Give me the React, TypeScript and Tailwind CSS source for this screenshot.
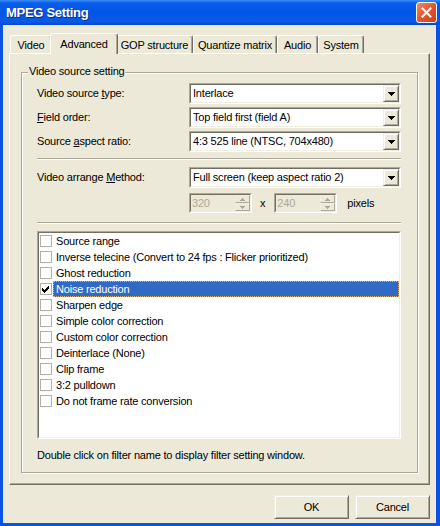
import React from "react";

const filters = [
  { name: "Source range", checked: false },
  { name: "Inverse telecine (Convert to 24 fps : Flicker prioritized)", checked: false },
  { name: "Ghost reduction", checked: false },
  { name: "Noise reduction", checked: true, selected: true },
  { name: "Sharpen edge", checked: false },
  { name: "Simple color correction", checked: false },
  { name: "Custom color correction", checked: false },
  { name: "Deinterlace (None)", checked: false },
  { name: "Clip frame", checked: false },
  { name: "3:2 pulldown", checked: false },
  { name: "Do not frame rate conversion", checked: false },
];

const tabs = [
  { label: "Video", w: "w-[42px]" },
  { label: "Advanced", w: "w-[64px]", active: true },
  { label: "GOP structure", w: "w-[77px]" },
  { label: "Quantize matrix", w: "w-[84px]" },
  { label: "Audio", w: "w-[41px]" },
  { label: "System", w: "w-[46px]" },
];

function DownArrow({ color = "#000" }: { color?: string }) {
  return (
    <svg width="7" height="4" viewBox="0 0 7 4" shapeRendering="crispEdges">
      <rect x="0" y="0" width="7" height="1" fill={color} />
      <rect x="1" y="1" width="5" height="1" fill={color} />
      <rect x="2" y="2" width="3" height="1" fill={color} />
      <rect x="3" y="3" width="1" height="1" fill={color} />
    </svg>
  );
}

function UpArrow({ color }: { color: string }) {
  return (
    <svg width="5" height="3" viewBox="0 0 5 3" shapeRendering="crispEdges">
      <rect x="2" y="0" width="1" height="1" fill={color} />
      <rect x="1" y="1" width="3" height="1" fill={color} />
      <rect x="0" y="2" width="5" height="1" fill={color} />
    </svg>
  );
}

function SmallDown({ color }: { color: string }) {
  return (
    <svg width="5" height="3" viewBox="0 0 5 3" shapeRendering="crispEdges">
      <rect x="0" y="0" width="5" height="1" fill={color} />
      <rect x="1" y="1" width="3" height="1" fill={color} />
      <rect x="2" y="2" width="1" height="1" fill={color} />
    </svg>
  );
}

function Combo({ value }: { value: string }) {
  return (
    <div className="flex h-[21px] w-[212px] border border-t-[#aca899] border-l-[#aca899] border-r-white border-b-white">
      <div className="flex flex-1 items-stretch border border-t-[#716f64] border-l-[#716f64] border-r-[#f1efe2] border-b-[#f1efe2] bg-white">
        <span className="flex-1 pl-[2px] leading-[17px] whitespace-nowrap">{value}</span>
        <div className="flex w-[16px] items-center justify-center border border-t-[#f1efe2] border-l-[#f1efe2] border-r-[#716f64] border-b-[#716f64] bg-[#ece9d8] shadow-[inset_1px_1px_0_#fff,inset_-1px_-1px_0_#aca899]">
          <DownArrow />
        </div>
      </div>
    </div>
  );
}

function Spinner({ value }: { value: string }) {
  return (
    <div className="flex h-[20px] w-[63px] border border-t-[#aca899] border-l-[#aca899] border-r-white border-b-white">
      <div className="flex flex-1 border border-t-[#716f64] border-l-[#716f64] border-r-[#f1efe2] border-b-[#f1efe2] bg-[#ece9d8]">
        <span className="flex-1 pl-[1px] leading-[16px] text-[#aca899]">{value}</span>
        <div className="flex w-[15px] flex-col">
          <div className="flex flex-1 items-center justify-center border border-t-[#f1efe2] border-l-[#f1efe2] border-r-[#aca899] border-b-[#aca899] bg-[#ece9d8]">
            <UpArrow color="#aca899" />
          </div>
          <div className="flex flex-1 items-center justify-center border border-t-[#f1efe2] border-l-[#f1efe2] border-r-[#aca899] border-b-[#aca899] bg-[#ece9d8]">
            <SmallDown color="#aca899" />
          </div>
        </div>
      </div>
    </div>
  );
}

function Separator() {
  return <div className="h-[2px] border-t border-t-[#aca899] border-b border-b-white" />;
}

function Checkbox({ checked }: { checked: boolean }) {
  return (
    <div className="flex h-[12px] w-[12px] shrink-0 items-center justify-center border border-[#b2b0a8] bg-white">
      {checked && (
        <svg width="8" height="7" viewBox="0 0 8 7" shapeRendering="crispEdges">
          <path d="M0 2h1v1h1v1h1v-1h1v-1h1v-1h1v-1h1v3h-1v1h-1v1h-1v1h-1v1h-1v-1h-1v-1h-1v-1h-1z" fill="#000" />
        </svg>
      )}
    </div>
  );
}

function Button({ label }: { label: string }) {
  return (
    <button className="flex h-[24px] w-[75px] items-center justify-center border border-t-[#f1efe2] border-l-[#f1efe2] border-r-[#716f64] border-b-[#716f64] bg-[#ece9d8] shadow-[inset_1px_1px_0_#fff,inset_-1px_-1px_0_#aca899]">
      {label}
    </button>
  );
}

export default function App() {
  return (
    <div className="flex h-[526px] w-[440px] flex-col bg-[#0a53e2] font-['Liberation_Sans',Arial,sans-serif] text-[11px] tracking-[-0.2px] text-black">
      {/* title bar */}
      <div className="flex h-[25px] items-center justify-between bg-[linear-gradient(180deg,#3b8ff9_0px,#0a5de9_3px,#0055e5_50%,#0a5ae8_85%,#0047d4_100%)] pl-[6px] pr-[3px]">
        <span className="text-[13px] font-bold tracking-[-0.3px] text-white [text-shadow:1px_1px_0_#0b2a8a]">
          MPEG Setting
        </span>
        <div className="flex h-[21px] w-[21px] items-center justify-center rounded-[3px] border border-white bg-[linear-gradient(135deg,#f0896a_0%,#e25b36_45%,#c8401c_100%)]">
          <svg width="11" height="11" viewBox="0 0 11 11">
            <path d="M1.5 1.5l8 8M9.5 1.5l-8 8" stroke="#fff" strokeWidth="2" strokeLinecap="square" />
          </svg>
        </div>
      </div>

      {/* client */}
      <div className="mb-[3px] ml-[3px] mr-[4px] flex flex-1 flex-col bg-[#ece9d8]">
        {/* tabs */}
        <div className="ml-[7px] mt-[8px] flex h-[20px] items-end">
          {tabs.map((t) =>
            t.active ? (
              <div
                key={t.label}
                className={`relative z-10 -mx-[2px] -mb-[1px] flex h-[21px] w-[68px] items-start justify-center rounded-t-[3px] border border-b-0 border-t-white border-l-white border-r-[#716f64] bg-[#ece9d8] pt-[2px] shadow-[inset_-1px_0_0_#aca899]`}
              >
                {t.label}
              </div>
            ) : (
              <div
                key={t.label}
                className={`flex h-[18px] ${t.w} items-center justify-center rounded-t-[3px] border border-b-0 border-t-white border-l-white border-r-[#716f64] bg-[#ece9d8] pt-[1px] shadow-[inset_-1px_0_0_#aca899]`}
              >
                {t.label}
              </div>
            )
          )}
        </div>

        {/* tab panel */}
        <div className="ml-[6px] flex h-[432px] w-[421px] flex-col border border-t-white border-l-white border-r-[#716f64] border-b-[#716f64] shadow-[inset_-1px_-1px_0_#aca899]">
          <div className="relative ml-[11px] mt-[18px] flex h-[401px] w-[397px] flex-col border border-[#aca899] shadow-[inset_1px_1px_0_#fff,1px_1px_0_#fff]">
            <span className="absolute -top-[8px] left-[6px] bg-[#ece9d8] px-[1px] leading-[13px]">
              Video source setting
            </span>

            <div className="flex flex-col pl-[15px] pr-[16px] pt-[10px]">
              <div className="flex flex-col gap-[3px]">
                <div className="flex items-center justify-between">
                  <span>
                    Video source <span className="underline">t</span>ype:
                  </span>
                  <Combo value="Interlace" />
                </div>
                <div className="flex items-center justify-between">
                  <span>
                    <span className="underline">F</span>ield order:
                  </span>
                  <Combo value="Top field first (field A)" />
                </div>
                <div className="flex items-center justify-between">
                  <span>
                    Source <span className="underline">a</span>spect ratio:
                  </span>
                  <Combo value="4:3 525 line (NTSC, 704x480)" />
                </div>
              </div>

              <div className="mt-[6px]">
                <Separator />
              </div>

              <div className="mt-[7px] flex items-center justify-between">
                <span>
                  Video arrange <span className="underline">M</span>ethod:
                </span>
                <Combo value="Full screen (keep aspect ratio 2)" />
              </div>

              <div className="ml-[152px] mt-[5px] flex items-center">
                <Spinner value="320" />
                <span className="ml-[8px] mr-[9px]">x</span>
                <Spinner value="240" />
                <span className="ml-[10px]">pixels</span>
              </div>

              <div className="mt-[9px]">
                <Separator />
              </div>

              {/* filter list */}
              <div className="mt-[7px] flex h-[208px] flex-col border border-t-[#aca899] border-l-[#aca899] border-r-white border-b-white">
                <div className="flex flex-1 flex-col border border-t-[#716f64] border-l-[#716f64] border-r-[#f1efe2] border-b-[#f1efe2] bg-white">
                  {filters.map((f) => (
                    <div key={f.name} className="flex h-[16px] items-center pl-[1px]">
                      <Checkbox checked={f.checked} />
                      {f.selected ? (
                        <span className="ml-[1px] flex h-[16px] flex-1 items-center border border-dotted border-[#d9b26a] bg-[#316ac5] pl-[2px] text-white">
                          {f.name}
                        </span>
                      ) : (
                        <span className="ml-[4px] whitespace-nowrap">{f.name}</span>
                      )}
                    </div>
                  ))}
                </div>
              </div>

              <p className="mt-[10px] leading-[13px]">
                Double click on filter name to display filter setting window.
              </p>
            </div>
          </div>
        </div>

        {/* buttons */}
        <div className="mr-[6px] mt-[10px] flex justify-end gap-[6px]">
          <Button label="OK" />
          <Button label="Cancel" />
        </div>
      </div>
    </div>
  );
}
